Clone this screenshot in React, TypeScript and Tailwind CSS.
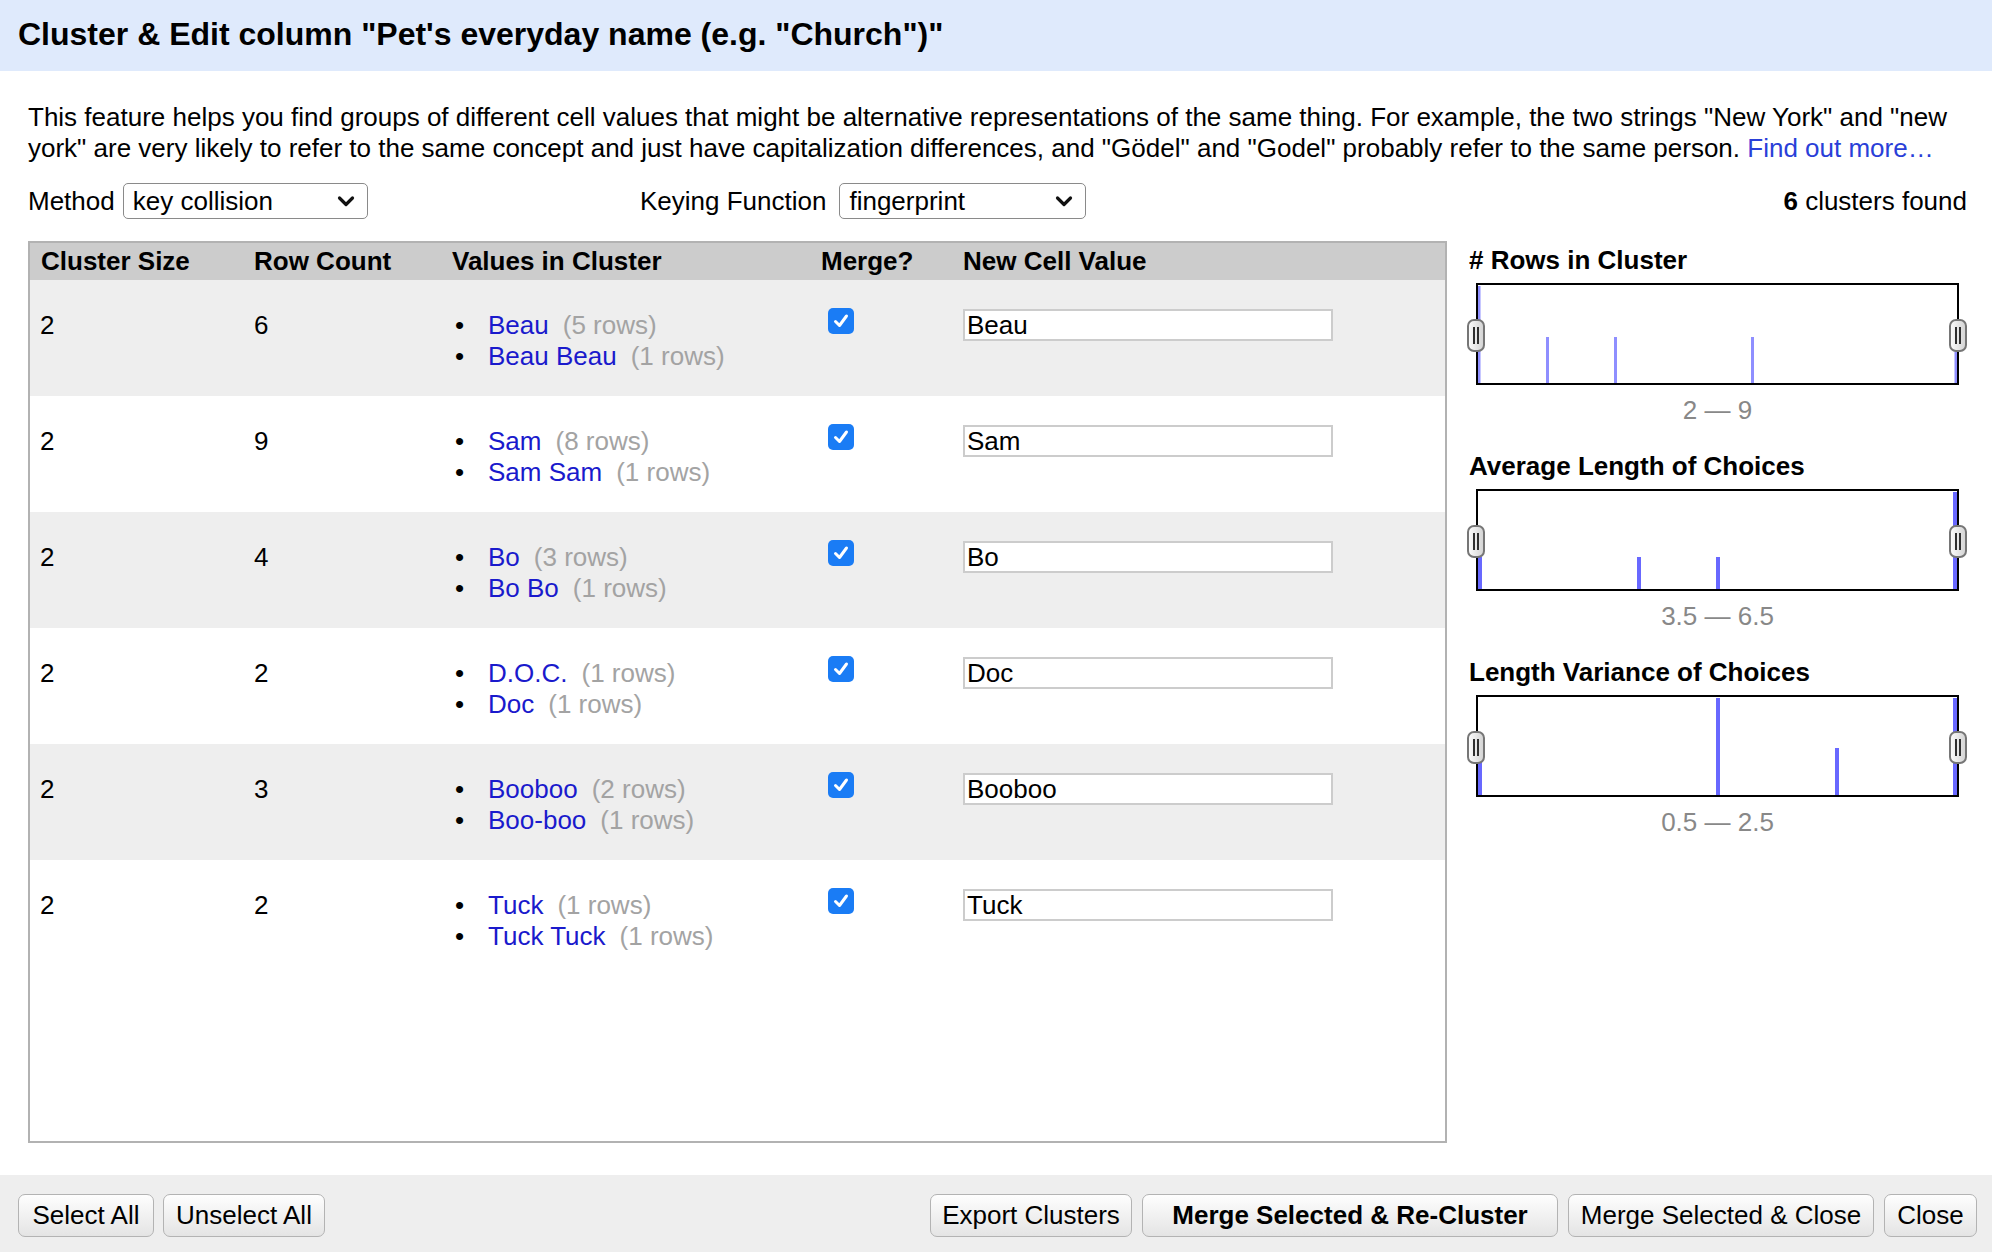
import React from 'react';

type Cluster = {
  size: number;
  rows: number;
  values: { name: string; count: number }[];
  newValue: string;
};

const clusters: Cluster[] = [
  { size: 2, rows: 6, values: [{ name: 'Beau', count: 5 }, { name: 'Beau Beau', count: 1 }], newValue: 'Beau' },
  { size: 2, rows: 9, values: [{ name: 'Sam', count: 8 }, { name: 'Sam Sam', count: 1 }], newValue: 'Sam' },
  { size: 2, rows: 4, values: [{ name: 'Bo', count: 3 }, { name: 'Bo Bo', count: 1 }], newValue: 'Bo' },
  { size: 2, rows: 2, values: [{ name: 'D.O.C.', count: 1 }, { name: 'Doc', count: 1 }], newValue: 'Doc' },
  { size: 2, rows: 3, values: [{ name: 'Booboo', count: 2 }, { name: 'Boo-boo', count: 1 }], newValue: 'Booboo' },
  { size: 2, rows: 2, values: [{ name: 'Tuck', count: 1 }, { name: 'Tuck Tuck', count: 1 }], newValue: 'Tuck' },
];

type Bar = { x: number; y: number; w: number };

const facets: { title: string; range: string; color: string; bars: Bar[] }[] = [
  {
    title: '# Rows in Cluster',
    range: '2 — 9',
    color: '#8f8fff',
    bars: [
      { x: 0, y: 1, w: 2.5 },
      { x: 68, y: 52, w: 3 },
      { x: 136, y: 52, w: 3 },
      { x: 273, y: 52, w: 3 },
      { x: 476.5, y: 52, w: 2.5 },
    ],
  },
  {
    title: 'Average Length of Choices',
    range: '3.5 — 6.5',
    color: '#6868ff',
    bars: [
      { x: 0, y: 66, w: 4 },
      { x: 159, y: 66, w: 4 },
      { x: 238, y: 66, w: 4 },
      { x: 475, y: 1, w: 4 },
    ],
  },
  {
    title: 'Length Variance of Choices',
    range: '0.5 — 2.5',
    color: '#6868ff',
    bars: [
      { x: 0, y: 49, w: 4 },
      { x: 238, y: 1, w: 4 },
      { x: 357, y: 51, w: 4 },
      { x: 475, y: 1, w: 4 },
    ],
  },
];

const Chevron = () => (
  <svg width="20" height="14" viewBox="0 0 20 14">
    <path d="M3.5 4 L10 10.5 L16.5 4" fill="none" stroke="#111" strokeWidth="3.2" strokeLinecap="round" strokeLinejoin="round" />
  </svg>
);

const FakeSelect: React.FC<{ value: string; width: string }> = ({ value, width }) => (
  <div className={`${width} h-[36px] flex items-center justify-between pl-[9px] pr-[11px] border-[1.5px] border-[#8a8a8a] rounded-[5px] bg-white`}>
    <span>{value}</span>
    <Chevron />
  </div>
);

const Handle = () => (
  <svg width="18" height="33" viewBox="0 0 18 33">
    <defs>
      <linearGradient id="hg" x1="0" x2="1" y1="0" y2="0">
        <stop offset="0" stopColor="#fdfdfd" />
        <stop offset="1" stopColor="#d2d2d2" />
      </linearGradient>
    </defs>
    <rect x="1" y="1" width="16" height="31" rx="6" fill="url(#hg)" stroke="#767676" strokeWidth="2" />
    <rect x="6" y="8" width="2" height="17" fill="#2f2f2f" />
    <rect x="10" y="8" width="2" height="17" fill="#2f2f2f" />
  </svg>
);

const Checkbox = () => (
  <div className="w-[26px] h-[26px] rounded-[5px] bg-[#1a7cf5] flex items-center justify-center">
    <svg width="18" height="18" viewBox="0 0 18 18">
      <path d="M3.5 9.5 L7.5 13.5 L14.5 4" fill="none" stroke="#fff" strokeWidth="3" strokeLinecap="round" strokeLinejoin="round" />
    </svg>
  </div>
);

const Button: React.FC<{ label: string; width: string; bold?: boolean }> = ({ label, width, bold }) => (
  <button className={`${width} h-[43px] rounded-[7px] border border-[#b3b3b3] bg-linear-to-b from-[#fefefe] to-[#e4e4e4] text-black text-center ${bold ? 'font-bold' : ''}`}>
    {label}
  </button>
);

export default function App() {
  return (
    <div className="w-[1992px] h-[1252px] flex flex-col bg-white text-black text-[26px] leading-[30.5px] font-['Liberation_Sans',Arial,sans-serif]">
      <div className="h-[71px] shrink-0 bg-[#dfeafc] px-[18px] pb-[4px] flex items-center">
        <h1 className="text-[32px] font-bold leading-[38px]">Cluster &amp; Edit column &quot;Pet's everyday name (e.g. &quot;Church&quot;)&quot;</h1>
      </div>

      <div className="h-[1104px] shrink-0 px-[28px] pt-[31px] flex flex-col">
        <p>
          This feature helps you find groups of different cell values that might be alternative representations of the same thing. For example, the two strings &quot;New York&quot; and &quot;new york&quot; are very likely to refer to the same concept and just have capitalization differences, and &quot;Gödel&quot; and &quot;Godel&quot; probably refer to the same person.{' '}
          <a className="text-[#2a3fd8]">Find out more…</a>
        </p>

        <div className="mt-[20px] h-[36px] flex items-center">
          <div className="w-[612px] flex items-center gap-[8px]">
            <span>Method</span>
            <FakeSelect value="key collision" width="w-[245px]" />
          </div>
          <div className="flex items-center gap-[13px]">
            <span>Keying Function</span>
            <FakeSelect value="fingerprint" width="w-[247px]" />
          </div>
          <div className="ml-auto mr-[-3px]">
            <span className="font-bold">6</span> clusters found
          </div>
        </div>

        <div className="mt-[22px] flex">
          <div className="w-[1419px] h-[902px] shrink-0 border-2 border-[#b2b2b2]">
            <div className="h-[37px] bg-[#ccc] grid grid-cols-[224px_198px_369px_142px_1fr] items-center font-bold">
              <div className="pl-[11px]">Cluster Size</div>
              <div>Row Count</div>
              <div>Values in Cluster</div>
              <div>Merge?</div>
              <div>New Cell Value</div>
            </div>
            {clusters.map((c, i) => (
              <div
                key={i}
                className={`h-[116px] pt-[30px] grid grid-cols-[224px_198px_369px_142px_1fr] items-start ${i % 2 === 0 ? 'bg-[#eee]' : 'bg-white'}`}
              >
                <div className="pl-[10px]">{c.size}</div>
                <div>{c.rows}</div>
                <div>
                  {c.values.map((v) => (
                    <div key={v.name} className="flex">
                      <span className="w-[36px] pl-[3px]">•</span>
                      <span className="text-[#1a1acc]">{v.name}</span>
                      <span className="ml-[14px] text-[#a3a3a3]">({v.count} rows)</span>
                    </div>
                  ))}
                </div>
                <div className="pl-[7px] -mt-[2px]">
                  <Checkbox />
                </div>
                <div className="-mt-[1px]">
                  <input
                    readOnly
                    value={c.newValue}
                    className="w-[370px] h-[32px] border-2 border-[#ccc] bg-white px-[2px] text-black outline-none"
                  />
                </div>
              </div>
            ))}
          </div>

          <div className="ml-[22px] pt-[4px] flex-1">
            {facets.map((f, i) => (
              <div key={f.title} className={i > 0 ? 'mt-[26px]' : ''}>
                <div className="font-bold leading-[30px]">{f.title}</div>
                <div className="relative mt-[8px] ml-[7px] w-[483px] h-[102px] border-2 border-black bg-white">
                  <svg width="479" height="98" viewBox="0 0 479 98" className="block">
                    {f.bars.map((b, j) => (
                      <rect key={j} x={b.x} y={b.y} width={b.w} height={98 - b.y} fill={f.color} />
                    ))}
                  </svg>
                  <div className="absolute left-[-11px] top-[34px] leading-none">
                    <Handle />
                  </div>
                  <div className="absolute right-[-10px] top-[34px] leading-none">
                    <Handle />
                  </div>
                </div>
                <div className="mt-[10px] ml-[7px] w-[483px] text-center text-[#888] leading-[30px]">{f.range}</div>
              </div>
            ))}
          </div>
        </div>
      </div>

      <div className="h-[77px] shrink-0 bg-[#eee] pt-[19px] pl-[18px] pr-[15px] flex items-start">
        <div className="flex gap-[9px]">
          <Button label="Select All" width="w-[136px]" />
          <Button label="Unselect All" width="w-[162px]" />
        </div>
        <div className="ml-auto flex gap-[10px]">
          <Button label="Export Clusters" width="w-[202px]" />
          <Button label="Merge Selected & Re-Cluster" width="w-[416px]" bold />
          <Button label="Merge Selected & Close" width="w-[306px]" />
          <Button label="Close" width="w-[93px]" />
        </div>
      </div>
    </div>
  );
}
